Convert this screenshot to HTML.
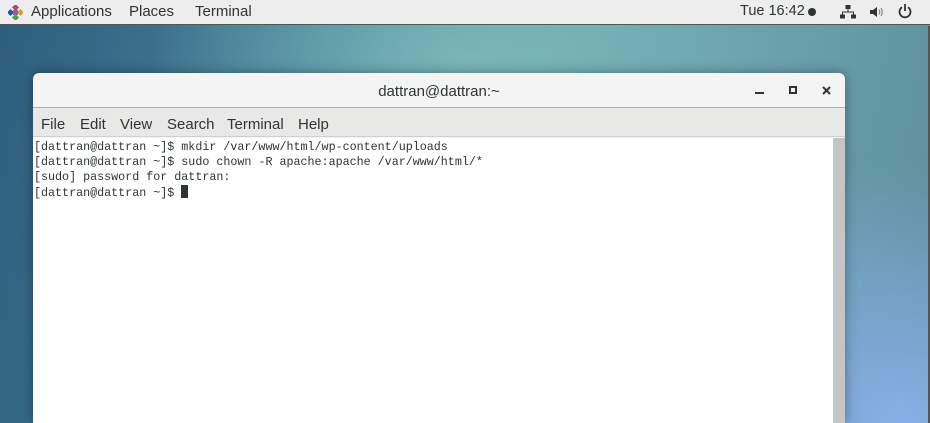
<!DOCTYPE html>
<html><head><style>
*{margin:0;padding:0;box-sizing:border-box}
html,body{width:930px;height:423px;overflow:hidden}
body{position:relative;font-family:"Liberation Sans",sans-serif;
background:
radial-gradient(ellipse 320px 160px at 470px 60px,rgba(125,185,185,.9),rgba(125,185,185,0) 100%),
radial-gradient(ellipse 300px 260px at 900px 420px,rgba(135,175,230,1),rgba(135,175,230,0) 100%),
linear-gradient(100deg,#2e5d7c 0%,#4a86a0 35%,#6aa8b0 55%,#6a9fac 80%,#5c8d9a 100%);}
#top{position:absolute;left:0;top:0;width:930px;height:25px;background:#ededed;border-bottom:1px solid #555;color:#2e3436;font-size:15px}
#top span{position:absolute;top:3px}
#win{position:absolute;left:33px;top:73px;width:812px;height:350px;background:#f4f4f4;border-radius:6px 6px 0 0;box-shadow:0 0 12px rgba(0,0,0,.35);overflow:hidden}
#title{height:35px;text-align:center;line-height:37px;font-size:15px;color:#2e3436;border-bottom:1px solid #b0b0b0}
#menu{height:29px;background:#e8e8e7;border-bottom:1px solid #d0d0d0;font-size:15px;color:#2e3436;position:relative}
#menu span{position:absolute;top:8px}
#term{position:absolute;left:0;top:65px;width:800px;height:300px;background:#fff;font-family:"Liberation Mono",monospace;font-size:11.7px;line-height:15px;color:#2e3436;padding:2px 0 0 1px;white-space:pre}
#sb{position:absolute;left:800px;top:65px;width:12px;height:300px;background:#c4c5c4}
.cur{display:inline-block;width:7px;height:13px;background:#2e3436;vertical-align:-2px}
</style></head><body>
<div id="top">
<svg style="position:absolute;left:8px;top:5px" width="15" height="15" viewBox="0 0 15 15"><rect x="5" y="0" width="5" height="5" fill="#b04080" transform="rotate(45 7.5 2.5)"/><rect x="0" y="5" width="5" height="5" fill="#3050a0" transform="rotate(45 2.5 7.5)"/><rect x="10" y="5" width="5" height="5" fill="#e0a020" transform="rotate(45 12.5 7.5)"/><rect x="5" y="10" width="5" height="5" fill="#50a040" transform="rotate(45 7.5 12.5)"/><rect x="5" y="5" width="5" height="5" fill="#9060a0"/></svg>
<span style="left:31px">Applications</span><span style="left:129px">Places</span><span style="left:195px">Terminal</span>
<span style="left:740px;font-size:14.5px">Tue 16:42</span>
<div style="position:absolute;left:808px;top:8px;width:8px;height:8px;border-radius:50%;background:#2e3436"></div>
<svg style="position:absolute;left:840px;top:4px" width="16" height="16" viewBox="0 0 16 16" fill="#2e3436"><rect x="5.5" y="1" width="5" height="4"/><rect x="7.5" y="5" width="1" height="3"/><rect x="2" y="7.5" width="12" height="1"/><rect x="2" y="7.5" width="1" height="3"/><rect x="13" y="7.5" width="1" height="3"/><rect x="0" y="10.5" width="5" height="4"/><rect x="11" y="10.5" width="5" height="4"/></svg>
<svg style="position:absolute;left:869px;top:4px" width="16" height="16" viewBox="0 0 16 16"><path d="M1 6h3l4-3v10l-4-3H1z" fill="#2e3436"/><path d="M10 5.5q1.5 2.5 0 5M12 4q2.5 4 0 8" stroke="#888" stroke-width="1.2" fill="none"/></svg>
<svg style="position:absolute;left:897px;top:3px" width="16" height="16" viewBox="0 0 16 16"><path d="M5 4.2A5.5 5.5 0 1 0 11 4.2" stroke="#2e3436" stroke-width="1.8" fill="none"/><path d="M8 1v7" stroke="#2e3436" stroke-width="1.8"/></svg>
</div>
<div id="win">
<div id="title">dattran@dattran:~</div>
<div style="position:absolute;left:722px;top:19px;width:9px;height:2px;background:#2e3436"></div>
<div style="position:absolute;left:756px;top:13px;width:8px;height:8px;border:2px solid #2e3436"></div>
<svg style="position:absolute;left:789px;top:13px" width="9" height="9"><path d="M1 1L8 8M8 1L1 8" stroke="#2e3436" stroke-width="2"/></svg>
<div id="menu"><span style="left:8px">File</span><span style="left:47px">Edit</span><span style="left:87px">View</span><span style="left:134px">Search</span><span style="left:194px">Terminal</span><span style="left:265px">Help</span></div>
<div id="term">[dattran@dattran ~]$ mkdir /var/www/html/wp-content/uploads
[dattran@dattran ~]$ sudo chown -R apache:apache /var/www/html/*
[sudo] password for dattran:
[dattran@dattran ~]$ <span class="cur"></span></div>
<div id="sb"></div>
</div>
<div style="position:absolute;right:0;top:26px;width:2px;height:397px;background:#555"></div>
</body></html>
